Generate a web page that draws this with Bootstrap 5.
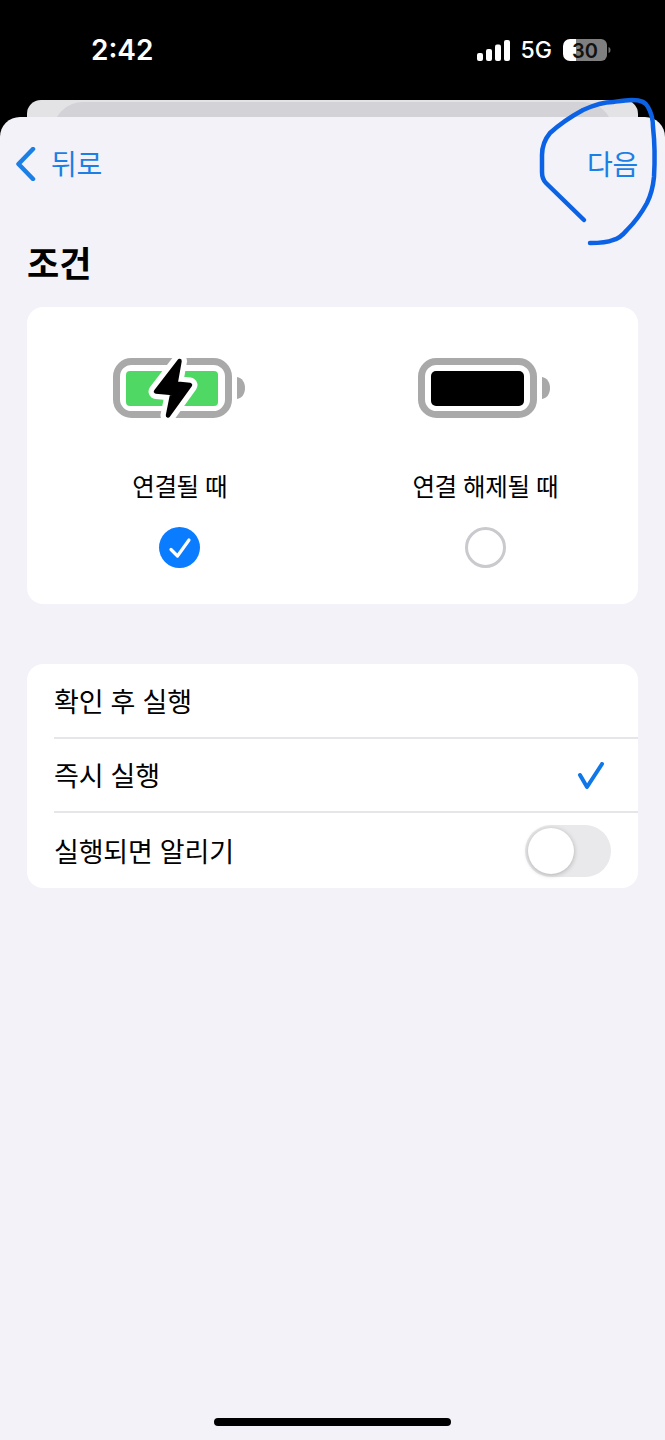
<!DOCTYPE html>
<html lang="ko">
<head>
<meta charset="utf-8">
<title>조건</title>
<link href="https://cdn.jsdelivr.net/npm/bootstrap@5.3.0/dist/css/bootstrap.min.css" rel="stylesheet">
<style>
html,body{margin:0;height:1440px;background:#000;overflow:hidden}
body{font-family:"Liberation Sans","Noto Sans CJK KR",sans-serif;color:#000}
.phone{position:relative;width:665px;height:1440px;background:#000;display:flex;flex-direction:column}
.stat{height:100px;color:#fff;padding:0 54px 0 91px}
.clock{font:600 28px/1 Inter,"Liberation Sans",sans-serif;margin-top:-1px}
.net{font:500 23px/1 Inter,"Liberation Sans",sans-serif;margin:0 10px 0 11px}
.under{height:17px;margin:0 27px;background:#e3e3e5;border-radius:14px 14px 0 0;overflow:hidden;display:flex;justify-content:center}
.under-inner{width:560px;height:40px;background:#d3d2d7;border-radius:30px 30px 0 0;margin-top:2px}
.sheet{flex:1;background:#f2f2f8;border-radius:20px 20px 0 0;display:flex;flex-direction:column;padding:0 27px}
.topnav{height:92px;margin:0 0 0 -11px;color:#1b7fe6;font-size:28px;letter-spacing:-.3px}
.nav-text{padding-top:5px}
.back-text{margin-left:8px}
.back-chev{margin-top:2px}
.heading{font-size:35px;font-weight:700;line-height:1;margin:38px 0 0;height:43px}
.panel{background:#fff;border-radius:16px}
.choices{height:297px;margin-top:17px}
.choice{width:50%;display:flex;flex-direction:column;align-items:center;padding-top:50px}
.choice-label{font-size:24.500px;line-height:34px;margin-top:52px;letter-spacing:-.4px;white-space:nowrap}
.dot{width:41px;height:41px;border-radius:50%;margin-top:22px}
.dot-on{background:#0a7cff}
.dot-off{border:3px solid #c9c9ce}
.opts{margin-top:60px;height:224px}
.opt{height:74px;padding-right:27px;margin-left:27px;font-size:27px;border-bottom:2px solid #e5e5ea;letter-spacing:-.2px}
.opt:first-child{height:75px}
.opt:last-child{border-bottom:0;height:75px}
.opt-text{padding-top:5px}
.tick{margin-right:6px;margin-top:1px}
.tgl{width:86px;height:52px;border-radius:26px;background:#e9e9eb;position:relative}
.knob{position:absolute;left:3px;top:3px;width:46px;height:46px;border-radius:50%;background:#fff;box-shadow:0 1px 5px rgba(0,0,0,.25)}
.homebar{position:absolute;left:214px;top:1418px;width:237px;height:8px;border-radius:4px;background:#000}
.ink{position:absolute;left:0;top:0;pointer-events:none}
</style>
</head>
<body>
<div class="phone">
  <div class="stat d-flex justify-content-between align-items-center">
    <div class="clock">2:42</div>
    <div class="d-flex align-items-center">
      <svg width="33" height="21" viewBox="0 0 33 21"><g fill="#fff"><rect x="0" y="13" width="6" height="8" rx="2"/><rect x="9" y="9" width="6" height="12" rx="2"/><rect x="18" y="4.500" width="6" height="16.500" rx="2"/><rect x="27" y="0" width="6" height="21" rx="2"/></g></svg>
      <span class="net">5G</span>
      <svg width="49" height="24" viewBox="0 0 49 24"><path d="M13 1H39a6 6 0 0 1 6 6V17a6 6 0 0 1-6 6H13Z" fill="#7f7f7f"/><path d="M14 1H8a7 7 0 0 0-7 7V16a7 7 0 0 0 7 7H14Z" fill="#fff"/><path d="M46.500 9c1.500.5 2 1.500 2 3s-.5 2.500-2 3Z" fill="#6f6f6f"/><text x="23" y="19.500" text-anchor="middle" font-family="Inter,'Liberation Sans',sans-serif" font-size="20" font-weight="600" fill="#111">30</text></svg>
    </div>
  </div>
  <div class="under"><div class="under-inner"></div></div>
  <div class="sheet">
    <div class="topnav d-flex justify-content-between align-items-center">
      <div class="d-flex align-items-center">
        <svg class="back-chev" width="27" height="34" viewBox="0 0 27 34" fill="none"><path d="M17 2 2.500 17 17 32" stroke="#1b7fe6" stroke-width="4.500" stroke-linecap="round" stroke-linejoin="round"/></svg>
        <span class="back-text nav-text">뒤로</span>
      </div>
      <span class="nav-text">다음</span>
    </div>
    <h1 class="heading">조건</h1>
    <div class="panel choices d-flex">
      <div class="choice">
        <svg width="134" height="62" viewBox="0 0 134 62">
          <rect x="3.500" y="4.500" width="112" height="53" rx="15" fill="none" stroke="#a9a9a9" stroke-width="7"/>
          <path d="M124 20c5 1 8 5 8 11s-3 10-8 11Z" fill="#a9a9a9"/>
          <rect x="13" y="14" width="92" height="35" rx="4" fill="#4fd964"/>
          <path d="M66.500 4 43 34.500 59.500 36 55 58.500 77 28 62.500 26.500Z" fill="#fff" stroke="#fff" stroke-width="15" stroke-linejoin="round"/>
          <path d="M66.500 4 43 34.500 59.500 36 55 58.500 77 28 62.500 26.500Z" fill="#000" stroke="#000" stroke-width="4.500" stroke-linejoin="round"/>
        </svg>
        <div class="choice-label">연결될 때</div>
        <div class="dot dot-on d-flex align-items-center justify-content-center">
          <svg width="24" height="22" viewBox="0 0 24 22" fill="none"><path d="M3 12.500 9.500 19 21 3" stroke="#fff" stroke-width="3.200" stroke-linecap="round" stroke-linejoin="round"/></svg>
        </div>
      </div>
      <div class="choice">
        <svg width="134" height="62" viewBox="0 0 134 62">
          <rect x="3.500" y="4.500" width="112" height="53" rx="15" fill="none" stroke="#a9a9a9" stroke-width="7"/>
          <path d="M124 20c5 1 8 5 8 11s-3 10-8 11Z" fill="#a9a9a9"/>
          <rect x="13" y="14" width="93" height="35" rx="5" fill="#000"/>
        </svg>
        <div class="choice-label">연결 해제될 때</div>
        <div class="dot dot-off"></div>
      </div>
    </div>
    <div class="panel opts">
      <div class="opt d-flex align-items-center"><span class="opt-text">확인 후 실행</span></div>
      <div class="opt d-flex align-items-center justify-content-between">
        <span class="opt-text">즉시 실행</span>
        <svg class="tick" width="28" height="28" viewBox="0 0 28 28" fill="none"><path d="M3 13 10 25 25 2" stroke="#0f77e8" stroke-width="4" stroke-linecap="round" stroke-linejoin="round"/></svg>
      </div>
      <div class="opt d-flex align-items-center justify-content-between">
        <span class="opt-text">실행되면 알리기</span>
        <div class="tgl"><div class="knob"></div></div>
      </div>
    </div>
  </div>
  <div class="homebar"></div>
  <svg class="ink" width="665" height="260" viewBox="0 0 665 260" fill="none"><path d="M584 220 546 183C543 180 542 177 542 172V155C542 146 545 139 550 133C562 122 572 116 583 110C594 105 604 102 613 102C620 101 626 100 632 100C640 100 646 102 648 107C652 114 653 120 653 127C655 145 655 160 654 177C653 187 651 195 647 203C641 214 634 223 627 230C622 236 618 239 613 240C606 243 598 243 590 243" stroke="#0c62e4" stroke-width="4.500" stroke-linecap="round" stroke-linejoin="round"/></svg>
</div>
</body>
</html>
